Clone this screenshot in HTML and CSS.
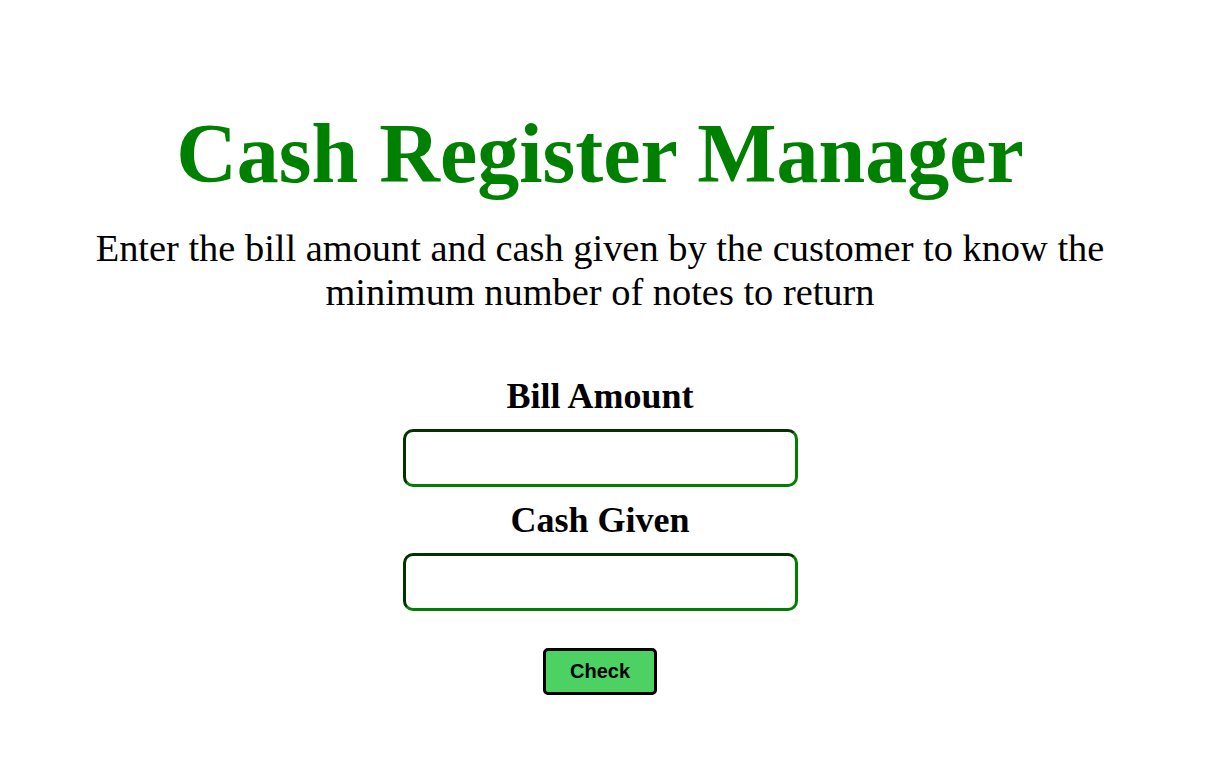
FILE: index.html
```html
<!DOCTYPE html>
<html>
<head>
<meta charset="utf-8">
<link rel="stylesheet" href="styles.css">
</head>
<body>
<main class="app">
  <h1 class="title">Cash Register Manager</h1>
  <p class="intro">Enter the bill amount and cash given by the customer to know the minimum number of notes to return</p>
  <form class="form">
    <label class="label" for="bill">Bill Amount</label>
    <input class="field" id="bill" type="text">
    <label class="label" for="cash">Cash Given</label>
    <input class="field" id="cash" type="text">
    <button class="btn" type="button">Check</button>
  </form>
</main>
</body>
</html>
```

FILE: styles.css
```css
html, body {
  margin: 0;
  padding: 0;
  background: #ffffff;
}
body {
  font-family: "Liberation Serif", "Times New Roman", serif;
  color: #000;
}
.app {
  width: 1200px;
  box-sizing: border-box;
  display: flex;
  flex-direction: column;
  align-items: center;
  padding: 0 80px;
}
.title {
  font-size: 84px;
  font-weight: bold;
  color: #008000;
  margin: 106px 0 0;
  line-height: 1.15;
}
.intro {
  font-size: 38.4px;
  text-align: center;
  margin: 23px 0 0;
  line-height: 44px;
}
.form {
  display: flex;
  flex-direction: column;
  align-items: center;
  margin-top: 62px;
}
.label {
  font-size: 36px;
  font-weight: bold;
  line-height: 1.15;
  margin-bottom: 12px;
}
.field {
  width: 395px;
  height: 58px;
  box-sizing: border-box;
  border: 3px solid;
  border-color: #003300 #008000 #008000 #003300;
  border-radius: 10px;
  margin-bottom: 13px;
  font-size: 20px;
  background: #fff;
}
.btn {
  margin-top: 24px;
  width: 114px;
  height: 47px;
  box-sizing: border-box;
  background: #4cd163;
  border: 3px solid #000;
  border-radius: 5px;
  font-family: "Liberation Sans", Arial, sans-serif;
  font-weight: bold;
  font-size: 20px;
  color: #000;
}
```
